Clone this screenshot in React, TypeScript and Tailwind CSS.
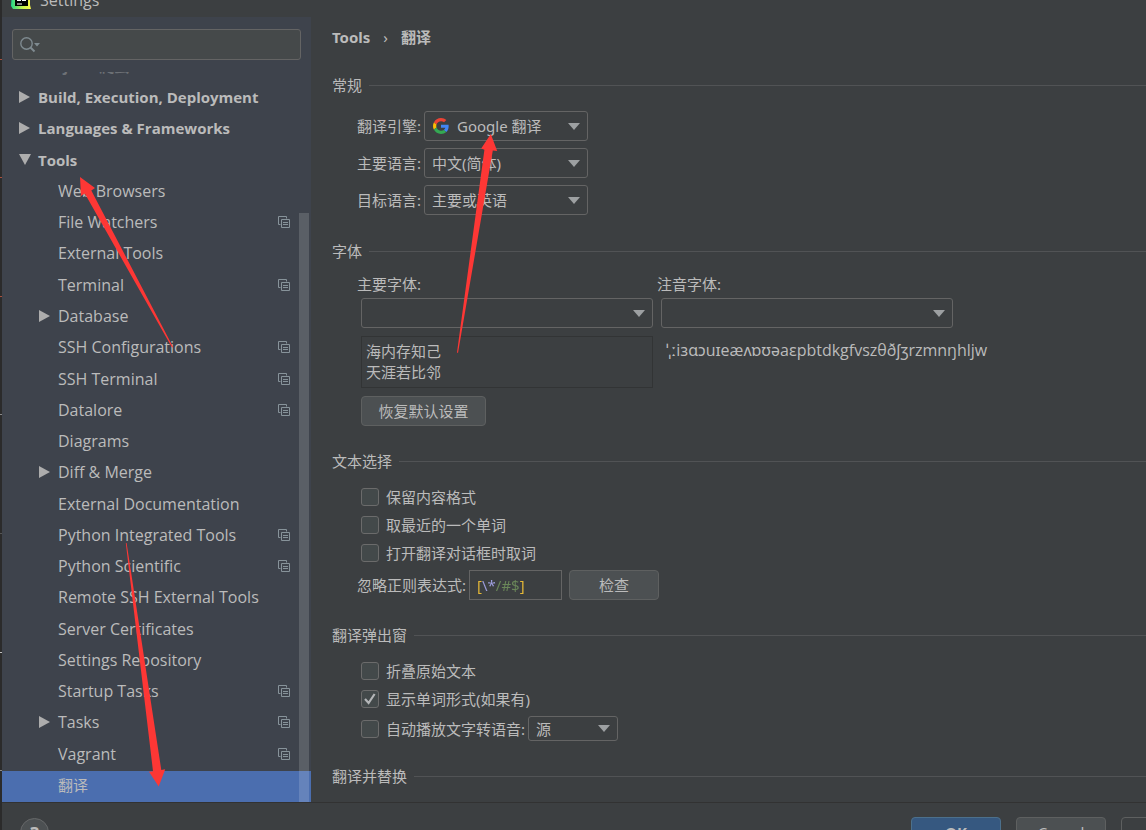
import { useState } from "react";
import type { ReactNode } from "react";
import clsx from "clsx";

type TreeNode = {
  label: string;
  level: 0 | 1;
  arrow?: "open" | "closed";
  project?: boolean;
  cjk?: boolean;
};

const TREE: TreeNode[] = [
  { label: "Build, Execution, Deployment", level: 0, arrow: "closed" },
  { label: "Languages & Frameworks", level: 0, arrow: "closed" },
  { label: "Tools", level: 0, arrow: "open" },
  { label: "Web Browsers", level: 1 },
  { label: "File Watchers", level: 1, project: true },
  { label: "External Tools", level: 1 },
  { label: "Terminal", level: 1, project: true },
  { label: "Database", level: 1, arrow: "closed" },
  { label: "SSH Configurations", level: 1, project: true },
  { label: "SSH Terminal", level: 1, project: true },
  { label: "Datalore", level: 1, project: true },
  { label: "Diagrams", level: 1 },
  { label: "Diff & Merge", level: 1, arrow: "closed" },
  { label: "External Documentation", level: 1 },
  { label: "Python Integrated Tools", level: 1, project: true },
  { label: "Python Scientific", level: 1, project: true },
  { label: "Remote SSH External Tools", level: 1 },
  { label: "Server Certificates", level: 1 },
  { label: "Settings Repository", level: 1 },
  { label: "Startup Tasks", level: 1, project: true },
  { label: "Tasks", level: 1, arrow: "closed", project: true },
  { label: "Vagrant", level: 1, project: true },
  { label: "翻译", level: 1, cjk: true },
];

function TreeArrow({ open }: { open: boolean }) {
  return (
    <svg width="12" height="12" viewBox="0 0 12 12" fill="#adadad">
      {open ? <path d="M0 0h12L6 11z" /> : <path d="M0 0v12l11-6z" />}
    </svg>
  );
}

function ProjectIcon() {
  return (
    <svg width="12" height="12" viewBox="0 0 12 12" fill="none" stroke="#87939a">
      <path d="M2.5 8.5h-2v-8h8v2" />
      <path d="M3.5 3.5h8v8h-8z" />
      <path d="M5 6.5h5M5 8.5h5" />
    </svg>
  );
}

function GoogleIcon() {
  return (
    <svg width="16" height="16" viewBox="0 0 48 48">
      <path
        fill="#EA4335"
        d="M24 9.5c3.54 0 6.71 1.22 9.21 3.6l6.85-6.85C35.9 2.38 30.47 0 24 0 14.62 0 6.51 5.38 2.56 13.22l7.98 6.19C12.43 13.72 17.74 9.5 24 9.5z"
      />
      <path
        fill="#4285F4"
        d="M46.98 24.55c0-1.57-.15-3.09-.38-4.55H24v9.02h12.94c-.58 2.96-2.26 5.48-4.78 7.18l7.73 6c4.51-4.18 7.09-10.36 7.09-17.65z"
      />
      <path
        fill="#FBBC05"
        d="M10.53 28.59c-.48-1.45-.76-2.99-.76-4.59s.27-3.14.76-4.59l-7.98-6.19C.92 16.46 0 20.12 0 24c0 3.88.92 7.54 2.56 10.78l7.97-6.19z"
      />
      <path
        fill="#34A853"
        d="M24 48c6.48 0 11.93-2.13 15.89-5.81l-7.73-6c-2.15 1.45-4.92 2.3-8.16 2.3-6.26 0-11.57-4.22-13.47-9.91l-7.98 6.19C6.51 42.62 14.62 48 24 48z"
      />
    </svg>
  );
}

function PyCharmIcon() {
  return (
    <svg width="20" height="20" viewBox="0 0 20 20">
      <defs>
        <linearGradient id="pc" x1="0" x2="1" y1="0" y2="0">
          <stop offset="0" stopColor="#21d789" />
          <stop offset="0.6" stopColor="#c8f24a" />
          <stop offset="1" stopColor="#fcf84a" />
        </linearGradient>
      </defs>
      <path d="M1 2l9-2 9 4v11l1 4H2L0 16z" fill="url(#pc)" />
      <path d="M4 3h13v13H4z" fill="#000" />
      <path d="M6 14h5" stroke="#fff" />
      <path d="M6 10.5h4M11 10.5h4" stroke="#fff" />
    </svg>
  );
}

type ComboProps = {
  id: string;
  options: string[];
  className: string;
  icon?: ReactNode;
  label?: string;
};

function Combo({ id, options, className, icon, label }: ComboProps) {
  return (
    <div className={clsx("relative", className)}>
      {icon && (
        <span className="pointer-events-none absolute inset-y-0 left-[9px] flex items-center">
          {icon}
        </span>
      )}
      <select
        id={id}
        aria-label={label}
        className={clsx(
          "block h-full w-full appearance-none rounded-[3px] border border-[#646464] bg-[#3c3f41] pr-8 outline-none",
          icon ? "pl-8" : "pl-[7px]",
        )}
      >
        {options.map((option) => (
          <option key={option}>{option}</option>
        ))}
      </select>
      <svg
        className="pointer-events-none absolute inset-y-0 right-2 my-auto"
        width="12"
        height="7"
        viewBox="0 0 12 7"
        fill="#9da0a2"
      >
        <path d="M0 0h12L6 7z" />
      </svg>
    </div>
  );
}

function Check({ label, defaultChecked }: { label: string; defaultChecked?: boolean }) {
  const [checked, setChecked] = useState(!!defaultChecked);
  return (
    <label className="flex h-7 items-center gap-[7px]">
      <span className="relative size-[18px]">
        <input
          type="checkbox"
          checked={checked}
          onChange={(e) => setChecked(e.target.checked)}
          className="block size-full appearance-none rounded-[3px] border border-[#6b6b6b] bg-[#43494a]"
        />
        {checked && (
          <svg
            className="pointer-events-none absolute inset-0"
            width="18"
            height="18"
            viewBox="0 0 18 18"
            fill="none"
            stroke="#b4b6b8"
            strokeWidth="2.2"
          >
            <path d="M4 9l3.6 4L13.6 4" />
          </svg>
        )}
      </span>
      {label}
    </label>
  );
}

function Section({ title, children }: { title: string; children?: ReactNode }) {
  return (
    <section className="mt-[25px]">
      <div className="flex items-center gap-[7px]">
        <h2>{title}</h2>
        <div className="h-px flex-1 bg-[#515355]" />
      </div>
      {children}
    </section>
  );
}

function Sidebar() {
  const [selected, setSelected] = useState("翻译");
  return (
    <aside className="relative flex w-[309px] shrink-0 flex-col bg-[#3e434c] pt-3 font-['Open_Sans','Noto_Sans_CJK_SC',sans-serif]">
      <div className="mx-[10px] flex h-[31px] shrink-0 items-center gap-px rounded-[3px] border border-[#646464] bg-[#45494a] pl-[7px]">
        <svg width="20" height="16" viewBox="0 0 20 16" fill="none" stroke="#7f8b91">
          <circle cx="6.5" cy="6.5" r="5.7" strokeWidth="1.4" />
          <path d="M10.5 10.5l4 4" strokeWidth="2" />
          <path d="M14 6h6l-3 3.5z" fill="#7f8b91" stroke="none" />
        </svg>
        <input aria-label="Search" className="min-w-0 flex-1 bg-transparent outline-none" />
      </div>
      <div className="mt-3 flex h-[11px] shrink-0 items-end overflow-hidden pl-9">
        <span className="h-[27px] shrink-0 font-bold text-[#6d7176]">Project: 爬虫</span>
      </div>
      <ul className="flex flex-1 flex-col">
        {TREE.map((node) => (
          <li key={node.label} className="flex-1">
            <button
              type="button"
              onClick={() => setSelected(node.label)}
              className={clsx(
                "flex h-full w-full items-center pr-[21px] pb-[3px] text-left",
                node.level === 0 ? "pl-[17px] font-bold" : "pl-[37px]",
                node.level === 1 && !node.cjk && "text-base leading-5",
                selected === node.label && "bg-[#4b6eaf]",
              )}
            >
              <span className="w-[19px] shrink-0">
                {node.arrow && <TreeArrow open={node.arrow === "open"} />}
              </span>
              <span className="flex-1">{node.label}</span>
              {node.project && <ProjectIcon />}
            </button>
          </li>
        ))}
      </ul>
      <div className="absolute top-[196px] right-[2px] bottom-0 w-[10px] bg-white/15" />
    </aside>
  );
}

function Annotations() {
  return (
    <svg
      className="pointer-events-none absolute top-0 left-0"
      width="1146"
      height="830"
      viewBox="0 0 1146 830"
      fill="#fd3735"
    >
      <path d="M80 177L95 188L91.3 190.5L173 347L172 347.5L84.8 193.5L81 196z" />
      <path d="M490.8 134L497.2 151L492.8 150.6L458 353L457 352.5L484.4 149.8L481.2 148.6z" />
      <path d="M158.7 786.5L165.2 769.3L161.3 770L126.6 543L125.8 543L153 771.2L149 771.7z" />
    </svg>
  );
}

export default function App() {
  return (
    <div className="relative flex h-screen overflow-hidden bg-[#3c3f41] font-['Noto_Sans','Noto_Sans_CJK_SC',sans-serif] text-[15px] leading-5 text-[#bbbbbb]">
      <div className="flex w-[2px] shrink-0 flex-col justify-around bg-[#2b2b2b]">
        <i className="h-px bg-[#a8503f]" />
        <i className="h-px bg-[#a8503f]" />
        <i className="h-px bg-[#a8503f]" />
        <i className="h-px bg-[#8a8a8a]" />
        <i className="h-px bg-[#555555]" />
        <i className="h-px bg-[#c0c0c0]" />
        <i className="h-px bg-[#8a8a8a]" />
      </div>
      <div className="flex min-w-0 flex-1 flex-col">
        <header className="flex h-[17px] shrink-0 items-end overflow-hidden">
          <div className="flex h-[34px] items-center gap-[9px] pl-[9px]">
            <PyCharmIcon />
            <h1 className="font-['Open_Sans',sans-serif] text-base leading-5">Settings</h1>
          </div>
        </header>

        <div className="flex min-h-0 flex-1">
          <Sidebar />
          <main className="min-w-0 flex-1 overflow-hidden pt-[10px] pl-[21px]">
            <nav className="-mb-[2px] flex items-center gap-[13px] font-bold">
              <a href="#tools">Tools</a>
              <span className="font-normal">›</span>
              <span>翻译</span>
            </nav>

            <div className="pt-[5px]">
              <Section title="常规">
                <div className="mt-4 flex flex-col gap-[7px] pb-px pl-[25px]">
                  <div className="flex items-center gap-[3px]">
                    <label htmlFor="engine">翻译引擎:</label>
                    <Combo
                      id="engine"
                      options={["Google 翻译"]}
                      icon={<GoogleIcon />}
                      className="h-[30px] w-[164px]"
                    />
                  </div>
                  <div className="flex items-center gap-[3px]">
                    <label htmlFor="primary">主要语言:</label>
                    <Combo id="primary" options={["中文(简体)"]} className="h-[30px] w-[164px]" />
                  </div>
                  <div className="flex items-center gap-[3px]">
                    <label htmlFor="target">目标语言:</label>
                    <Combo id="target" options={["主要或英语"]} className="h-[30px] w-[164px]" />
                  </div>
                </div>
              </Section>

              <Section title="字体">
                <div className="mt-[13px] flex gap-2 pl-[29px]">
                  <div className="w-[292px]">
                    <label htmlFor="font" className="-ml-1 block">
                      主要字体:
                    </label>
                    <Combo id="font" options={[""]} className="mt-1 h-[30px]" />
                    <div className="mt-2 border border-[#323435] px-1 py-1 leading-[21px]">
                      <p>海内存知己</p>
                      <p>天涯若比邻</p>
                    </div>
                    <button
                      type="button"
                      className="mt-2 h-[30px] w-[125px] rounded-[4px] border border-[#5e6060] bg-[#4c5052]"
                    >
                      恢复默认设置
                    </button>
                  </div>
                  <div className="w-[292px]">
                    <label htmlFor="phonetic" className="-ml-1 block">
                      注音字体:
                    </label>
                    <Combo id="phonetic" options={[""]} className="mt-1 h-[30px]" />
                    <p className="mt-3 pl-[5px] font-['Open_Sans','Noto_Sans',sans-serif] text-base leading-5 whitespace-nowrap">
                      ˈˌːiɜɑɔuɪeæʌɒʊəaɛpbtdkgfvszθðʃʒrzmnŋhljw
                    </p>
                  </div>
                </div>
              </Section>

              <Section title="文本选择">
                <div className="mt-3 pl-[29px]">
                  <Check label="保留内容格式" />
                  <Check label="取最近的一个单词" />
                  <Check label="打开翻译对话框时取词" />
                </div>
                <div className="mt-[3px] flex items-center gap-[3px] pl-[25px]">
                  <label htmlFor="ignore">忽略正则表达式:</label>
                  <div className="h-[30px] w-[93px] border border-[#646464] px-[7px] focus-within:border-[#466d94]">
                    <input
                      id="ignore"
                      defaultValue="[\*/#$]"
                      className="block h-full w-full bg-[linear-gradient(to_right,#e8ba36_5px,#9f9fe0_5px_19px,#6a8759_19px_43px,#e8ba36_43px)] bg-clip-text text-transparent outline-none"
                    />
                  </div>
                  <button
                    type="button"
                    className="ml-1 h-[30px] w-[90px] rounded-[4px] border border-[#5e6060] bg-[#4c5052]"
                  >
                    检查
                  </button>
                </div>
              </Section>

              <Section title="翻译弹出窗">
                <div className="mt-3 pl-[29px]">
                  <Check label="折叠原始文本" />
                  <Check label="显示单词形式(如果有)" defaultChecked />
                  <div className="mt-[3px] flex h-[25px] items-center gap-[3px]">
                    <Check label="自动播放文字转语音:" />
                    <Combo
                      id="tts"
                      label="语音来源"
                      options={["源"]}
                      className="h-[25px] w-[90px]"
                    />
                  </div>
                </div>
              </Section>

              <Section title="翻译并替换" />
            </div>
          </main>
        </div>

        <footer className="flex h-7 shrink-0 overflow-hidden border-t border-[#323232] pt-[14px]">
          <button
            type="button"
            aria-label="Help"
            className="mt-px ml-[18px] flex size-[29px] shrink-0 items-center justify-center rounded-full border border-[#666869] bg-[#4c5052] text-lg leading-none font-bold"
          >
            ?
          </button>
          <div className="-mr-[65px] ml-auto flex gap-[15px]">
            <button
              type="button"
              className="h-[30px] w-[90px] rounded-[4px] border border-[#4c708c] bg-[#365880] font-bold"
            >
              OK
            </button>
            <button
              type="button"
              className="h-[30px] w-[90px] rounded-[4px] border border-[#5e6060] bg-[#4c5052]"
            >
              Cancel
            </button>
            <button
              type="button"
              disabled
              aria-label="Apply"
              className="h-[30px] w-[90px] rounded-[4px] border border-[#5e6060]"
            />
          </div>
        </footer>
      </div>
      <Annotations />
    </div>
  );
}
